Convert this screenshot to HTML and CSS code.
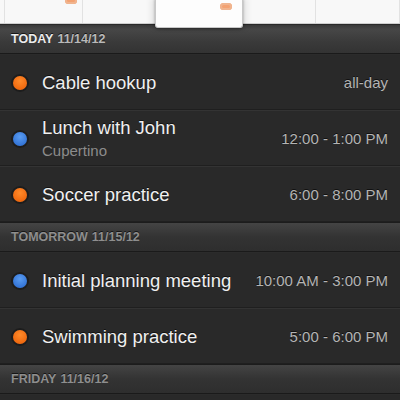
FILE: index.html
```html
<!DOCTYPE html>
<html>
<head>
<meta charset="utf-8">
<link rel="stylesheet" href="styles.css">
</head>
<body>
<div class="screen">
  <div class="calendar">
    <div class="cell first"></div>
    <div class="cell wide"><span class="blob blob-a"></span></div>
    <div class="cell wider"></div>
    <div class="cell last"></div>
    <div class="popup"><span class="blob blob-b"></span></div>
  </div>
  <div class="list">
    <div class="day-header today"><span class="day">TODAY</span> <span class="date">11/14/12</span></div>
    <div class="event">
      <span class="dot orange"></span>
      <div class="info"><div class="title">Cable hookup</div></div>
      <div class="time">all-day</div>
    </div>
    <div class="event">
      <span class="dot blue"></span>
      <div class="info"><div class="title">Lunch with John</div><div class="sub">Cupertino</div></div>
      <div class="time">12:00 - 1:00 PM</div>
    </div>
    <div class="event">
      <span class="dot orange"></span>
      <div class="info"><div class="title">Soccer practice</div></div>
      <div class="time">6:00 - 8:00 PM</div>
    </div>
    <div class="day-header"><span class="day">TOMORROW</span> <span class="date">11/15/12</span></div>
    <div class="event">
      <span class="dot blue"></span>
      <div class="info"><div class="title">Initial planning meeting</div></div>
      <div class="time">10:00 AM - 3:00 PM</div>
    </div>
    <div class="event">
      <span class="dot orange"></span>
      <div class="info"><div class="title">Swimming practice</div></div>
      <div class="time">5:00 - 6:00 PM</div>
    </div>
    <div class="day-header"><span class="day">FRIDAY</span> <span class="date">11/16/12</span></div>
    <div class="event"></div>
  </div>
</div>
</body>
</html>
```
FILE: styles.css
```css
html, body {
  margin: 0;
  padding: 0;
  background: #262626;
}
.screen {
  width: 400px;
  height: 400px;
  overflow: hidden;
  position: relative;
  font-family: "Liberation Sans", Arial, sans-serif;
  background: #282828;
}
.calendar {
  height: 23px;
  display: flex;
  background: #f8f8f8;
  position: relative;
  border-bottom: 1px solid #cfcfcf;
}
.cell {
  border-right: 1px solid #e2e2e2;
  position: relative;
}
.cell.first { width: 4px; }
.cell.wide { width: 77px; }
.cell.wider { width: 232px; }
.cell.last { flex: 1; border-left: none; }
.blob {
  position: absolute;
  width: 12px;
  height: 7px;
  border-radius: 4px;
  background: #f3a272;
  box-shadow: inset 0 0 0 2px #f0b48e;
}
.blob-a {
  left: 60px;
  top: -3px;
}
.popup {
  position: absolute;
  left: 155px;
  top: -2px;
  width: 86px;
  height: 29px;
  background: #fdfdfd;
  border: 1px solid #c8c8c8;
  border-top: none;
  border-radius: 0 0 3px 3px;
  box-shadow: 0 1px 3px rgba(0,0,0,0.35), 4px 0 6px rgba(0,0,0,0.08), -4px 0 6px rgba(0,0,0,0.08);
  z-index: 2;
}
.blob-b {
  left: 64px;
  top: 5px;
}
.list {
  display: flex;
  flex-direction: column;
}
.day-header {
  height: 28px;
  border-top: 1px solid #1c1c1c;
  border-bottom: 1px solid #1a1a1a;
  background: linear-gradient(#444444, #333333 50%, #2e2e2e);
  display: flex;
  align-items: center;
  padding-left: 11px;
  font-size: 12.5px;
  font-weight: bold;
  color: #8e8e8e;
  text-shadow: 0 -1px 0 #151515;
  gap: 4px;
}
.day-header.today {
  background: linear-gradient(#3a3a3a, #474747 15%, #3a3a3a 60%, #333333);
  border-top: 1px solid #2a2a2a;
}
.day-header.today .day { color: #ececec; }
.day-header.today .date { color: #b9b9b9; }
.event {
  height: 55px;
  border-top: 1px solid #333333;
  border-bottom: 0;
  box-shadow: inset 0 -1px 0 #1f1f1f;
  display: flex;
  align-items: center;
  padding: 0 12px 0 13px;
  background: #292929;
}
.day-header + .event {
  border-top: 1px solid #2b2b2b;
}
.dot {
  width: 14px;
  height: 14px;
  border-radius: 50%;
  flex: none;
  margin-right: 15px;
  box-shadow: 0 0 0 2px #1d1d1d;
}
.dot.orange {
  background: radial-gradient(circle at 50% 35%, #ff8a2a, #f06a10 70%);
}
.dot.blue {
  background: radial-gradient(circle at 50% 35%, #5a9cf0, #3576d8 70%);
}
.info {
  flex: 1;
  display: flex;
  flex-direction: column;
}
.title {
  font-size: 18.5px;
  color: #f0f0f0;
  line-height: 22px;
  text-shadow: 0 -1px 0 #111;
}
.sub {
  font-size: 15px;
  color: #8c8c8c;
  line-height: 20px;
  margin-top: 2px;
}
.time {
  font-size: 15px;
  color: #b4b4b4;
  white-space: nowrap;
  text-shadow: 0 -1px 0 #111;
}
```
